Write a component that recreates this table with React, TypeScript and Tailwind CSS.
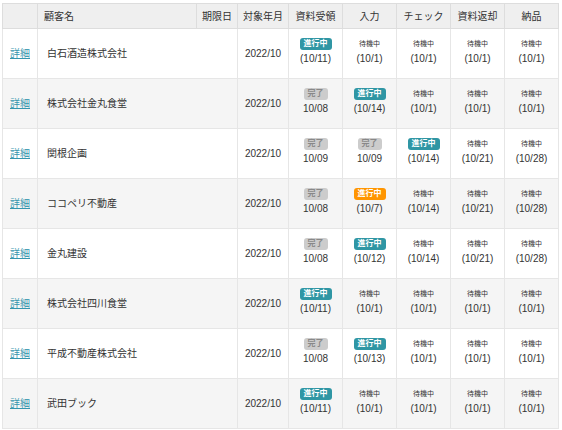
import React from 'react'

type Step = { s: 'run' | 'warn' | 'done' | 'wait'; d: string }

const rows: { name: string; steps: Step[] }[] = [
  {
    name: '白石酒造株式会社',
    steps: [
      { s: 'run', d: '(10/11)' },
      { s: 'wait', d: '(10/1)' },
      { s: 'wait', d: '(10/1)' },
      { s: 'wait', d: '(10/1)' },
      { s: 'wait', d: '(10/1)' },
    ],
  },
  {
    name: '株式会社金丸食堂',
    steps: [
      { s: 'done', d: '10/08' },
      { s: 'run', d: '(10/14)' },
      { s: 'wait', d: '(10/1)' },
      { s: 'wait', d: '(10/1)' },
      { s: 'wait', d: '(10/1)' },
    ],
  },
  {
    name: '関根企画',
    steps: [
      { s: 'done', d: '10/09' },
      { s: 'done', d: '10/09' },
      { s: 'run', d: '(10/14)' },
      { s: 'wait', d: '(10/21)' },
      { s: 'wait', d: '(10/28)' },
    ],
  },
  {
    name: 'ココペリ不動産',
    steps: [
      { s: 'done', d: '10/08' },
      { s: 'warn', d: '(10/7)' },
      { s: 'wait', d: '(10/14)' },
      { s: 'wait', d: '(10/21)' },
      { s: 'wait', d: '(10/28)' },
    ],
  },
  {
    name: '金丸建設',
    steps: [
      { s: 'done', d: '10/08' },
      { s: 'run', d: '(10/12)' },
      { s: 'wait', d: '(10/14)' },
      { s: 'wait', d: '(10/21)' },
      { s: 'wait', d: '(10/28)' },
    ],
  },
  {
    name: '株式会社四川食堂',
    steps: [
      { s: 'run', d: '(10/11)' },
      { s: 'wait', d: '(10/1)' },
      { s: 'wait', d: '(10/1)' },
      { s: 'wait', d: '(10/1)' },
      { s: 'wait', d: '(10/1)' },
    ],
  },
  {
    name: '平成不動産株式会社',
    steps: [
      { s: 'done', d: '10/08' },
      { s: 'run', d: '(10/13)' },
      { s: 'wait', d: '(10/1)' },
      { s: 'wait', d: '(10/1)' },
      { s: 'wait', d: '(10/1)' },
    ],
  },
  {
    name: '武田ブック',
    steps: [
      { s: 'run', d: '(10/11)' },
      { s: 'wait', d: '(10/1)' },
      { s: 'wait', d: '(10/1)' },
      { s: 'wait', d: '(10/1)' },
      { s: 'wait', d: '(10/1)' },
    ],
  },
]

const heads = ['資料受領', '入力', 'チェック', '資料返却', '納品']

function Status({ step }: { step: Step }) {
  let label
  if (step.s === 'run') {
    label = (
      <span className="inline-block rounded-[3px] bg-[#2f96a4] px-[4px] text-[8px] font-bold leading-[12px] text-white">
        進行中
      </span>
    )
  } else if (step.s === 'warn') {
    label = (
      <span className="inline-block rounded-[3px] bg-[#ff9500] px-[4px] text-[8px] font-bold leading-[12px] text-white">
        進行中
      </span>
    )
  } else if (step.s === 'done') {
    label = (
      <span className="inline-block rounded-[3px] bg-[#cccccc] px-[4px] text-[8px] font-bold leading-[12px] text-[#888]">
        完了
      </span>
    )
  } else {
    label = <span className="text-[7px] leading-[12px] text-[#333]">待機中</span>
  }
  return (
    <div className="flex flex-col items-center pb-[5px]">
      {label}
      <span className="mt-[2px] text-[10px] leading-[13px] text-[#333]">{step.d}</span>
    </div>
  )
}

export default function App() {
  return (
    <div
      className="bg-white pl-[2px] pt-[3px]"
      style={{ fontFamily: '"Liberation Sans", "Noto Sans CJK JP", sans-serif' }}
    >
      <table className="w-[556px] table-fixed border-collapse border border-[#dddddd] text-[10px] text-[#333]">
        <colgroup>
          <col className="w-[35px]" />
          <col className="w-[159px]" />
          <col className="w-[41px]" />
          <col className="w-[51px]" />
          <col className="w-[54px]" />
          <col className="w-[54px]" />
          <col className="w-[54px]" />
          <col className="w-[54px]" />
          <col className="w-[54px]" />
        </colgroup>
        <thead>
          <tr className="h-[25px] bg-[#efefef]">
            <th className="border border-[#dddddd]" />
            <th className="border border-[#dddddd] px-[6px] text-left font-normal">顧客名</th>
            <th className="border border-[#dddddd] text-center font-normal">期限日</th>
            <th className="border border-[#dddddd] text-center font-normal">対象年月</th>
            {heads.map((h) => (
              <th key={h} className="border border-[#dddddd] text-center font-normal">
                {h}
              </th>
            ))}
          </tr>
        </thead>
        <tbody>
          {rows.map((r, i) => (
            <tr key={r.name} className={i % 2 === 1 ? 'h-[50px] bg-[#f5f5f5]' : 'h-[50px] bg-white'}>
              <td className="border border-[#e6e6e6] text-center">
                <a href="#" className="text-[#3595ad] underline">
                  詳細
                </a>
              </td>
              <td colSpan={2} className="border border-[#e6e6e6] px-[9px]">
                {r.name}
              </td>
              <td className="border border-[#e6e6e6] text-center">2022/10</td>
              {r.steps.map((s, j) => (
                <td key={j} className="border border-[#e6e6e6]">
                  <Status step={s} />
                </td>
              ))}
            </tr>
          ))}
        </tbody>
      </table>
    </div>
  )
}
